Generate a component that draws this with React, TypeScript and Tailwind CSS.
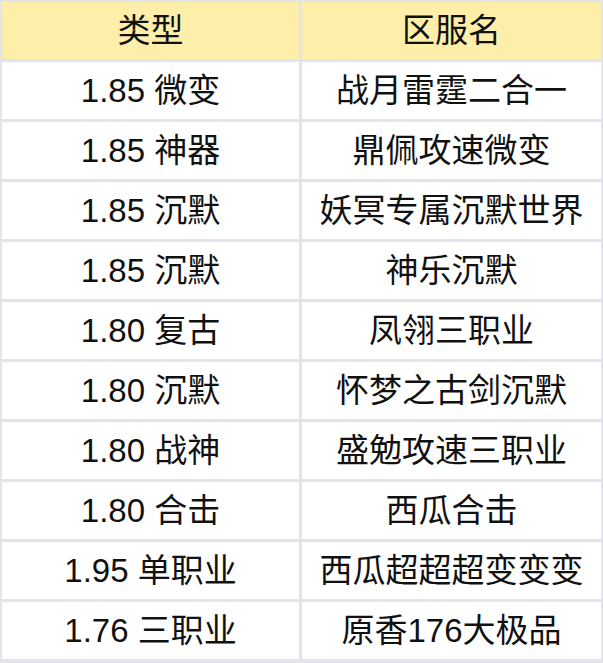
const rows: [string, string][] = [
  ['1.85 微变', '战月雷霆二合一'],
  ['1.85 神器', '鼎佩攻速微变'],
  ['1.85 沉默', '妖冥专属沉默世界'],
  ['1.85 沉默', '神乐沉默'],
  ['1.80 复古', '凤翎三职业'],
  ['1.80 沉默', '怀梦之古剑沉默'],
  ['1.80 战神', '盛勉攻速三职业'],
  ['1.80 合击', '西瓜合击'],
  ['1.95 单职业', '西瓜超超超变变变'],
  ['1.76 三职业', '原香176大极品'],
];

const Cell = ({ children, head }: { children: React.ReactNode; head?: boolean }) => (
  <div
    className={`h-[57px] flex items-center justify-center text-[33px] text-[#111] ${
      head ? 'bg-[#fdeeaa]' : 'bg-white'
    }`}
  >
    {children}
  </div>
);

export default function App() {
  return (
    <div
      className="w-[603px] h-[663px] bg-[#e3e4e9] pt-[2px] pl-[2px] pr-[2px] pb-[4px]"
      style={{ fontFamily: '"Liberation Sans", "Noto Sans CJK SC", sans-serif' }}
    >
      <div className="grid grid-cols-[297px_1fr] gap-[3px]">
        <Cell head>类型</Cell>
        <Cell head>区服名</Cell>
        {rows.map(([type, name], i) => (
          <div key={i} className="contents">
            <Cell>{type}</Cell>
            <Cell>{name}</Cell>
          </div>
        ))}
      </div>
    </div>
  );
}
